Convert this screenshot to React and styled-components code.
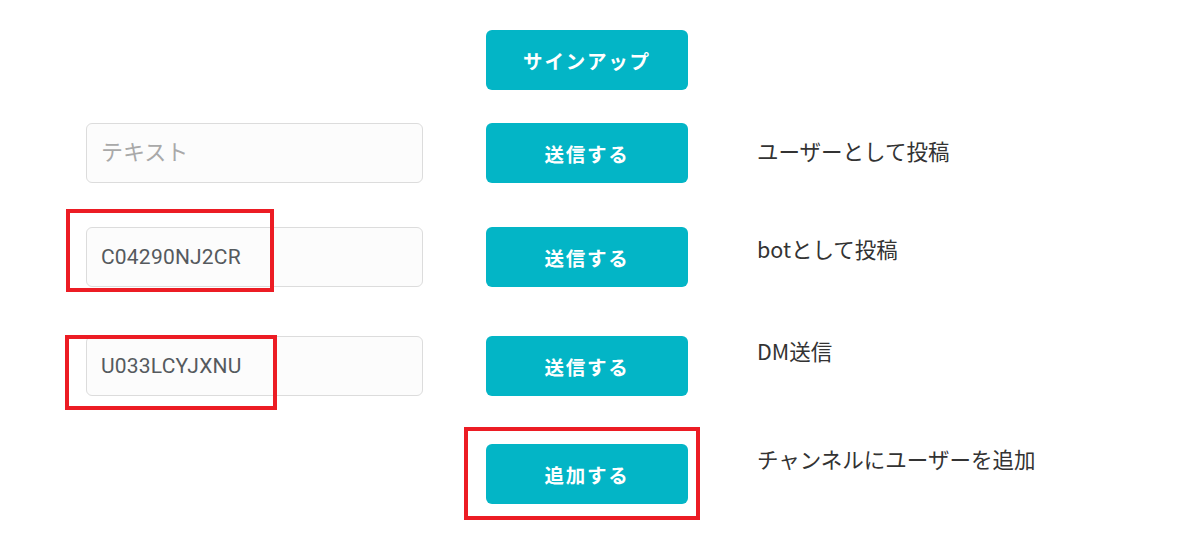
import React from 'react';
import styled, { createGlobalStyle } from 'styled-components';

const GlobalStyle = createGlobalStyle`
  html, body {
    margin: 0;
    padding: 0;
    background: #ffffff;
  }
  body {
    font-family: "Noto Sans CJK JP", "Noto Sans", sans-serif;
  }
`;

const StyledWrapper = styled.div`
  padding: 30px 0 0 86px;
  width: 1200px;
  height: 537px;
  box-sizing: border-box;
`;

const StyledRow = styled.div`
  display: grid;
  grid-template-columns: 400px 271px 1fr;
  align-items: start;
  margin-top: ${({ gap }) => gap || 0}px;
`;

const StyledCell = styled.div`
  position: relative;
  height: 60px;
`;

const StyledInput = styled.input`
  box-sizing: border-box;
  width: 337px;
  height: 60px;
  padding: 0 14px;
  border: 1px solid #dcdcdc;
  border-radius: 6px;
  background: #fcfcfc;
  color: #555a5e;
  font-family: Roboto, "Noto Sans CJK JP", sans-serif;
  font-size: 21px;
  letter-spacing: 0.2px;
  outline: none;

  &::placeholder {
    color: #a9a9a9;
    font-family: "Noto Sans CJK JP", sans-serif;
    font-size: 22px;
    letter-spacing: 0;
  }
`;

const StyledButton = styled.button`
  width: 202px;
  height: 60px;
  padding: 0;
  border: none;
  border-radius: 6px;
  background: #03b5c6;
  color: #ffffff;
  font-family: "Noto Sans CJK JP", sans-serif;
  font-size: 19.5px;
  font-weight: 700;
  letter-spacing: 1.8px;
  cursor: pointer;
`;

const StyledLabel = styled.p`
  margin: ${({ offset }) => offset}px 0 0;
  font-size: 21.5px;
  line-height: 30px;
  color: #333333;
  white-space: nowrap;
`;

const StyledMark = styled.span`
  position: absolute;
  left: ${({ x }) => x}px;
  top: ${({ y }) => y}px;
  width: ${({ w }) => w}px;
  height: ${({ h }) => h}px;
  box-sizing: border-box;
  border: 4px solid #ec1c24;
  pointer-events: none;
`;

const rows = [
  { gap: 0, button: 'サインアップ' },
  { gap: 33, placeholder: 'テキスト', button: '送信する', label: 'ユーザーとして投稿', offset: 13 },
  { gap: 44, value: 'C04290NJ2CR', button: '送信する', label: 'botとして投稿', offset: 7, markInput: { x: -20, y: -18, w: 208, h: 83 } },
  { gap: 49, value: 'U033LCYJXNU', button: '送信する', label: 'DM送信', offset: 0, markInput: { x: -21, y: -1, w: 212, h: 75 } },
  { gap: 48, button: '追加する', label: 'チャンネルにユーザーを追加', offset: 0, markButton: { x: -22, y: -17, w: 236, h: 93 } },
];

const App = () => (
  <>
    <GlobalStyle />
    <StyledWrapper>
      {rows.map((row, i) => (
        <StyledRow key={i} gap={row.gap}>
          <StyledCell>
            {(row.placeholder || row.value) && (
              <StyledInput placeholder={row.placeholder} defaultValue={row.value} />
            )}
            {row.markInput && <StyledMark {...row.markInput} />}
          </StyledCell>
          <StyledCell>
            <StyledButton>{row.button}</StyledButton>
            {row.markButton && <StyledMark {...row.markButton} />}
          </StyledCell>
          <div>{row.label && <StyledLabel offset={row.offset}>{row.label}</StyledLabel>}</div>
        </StyledRow>
      ))}
    </StyledWrapper>
  </>
);

export default App;
